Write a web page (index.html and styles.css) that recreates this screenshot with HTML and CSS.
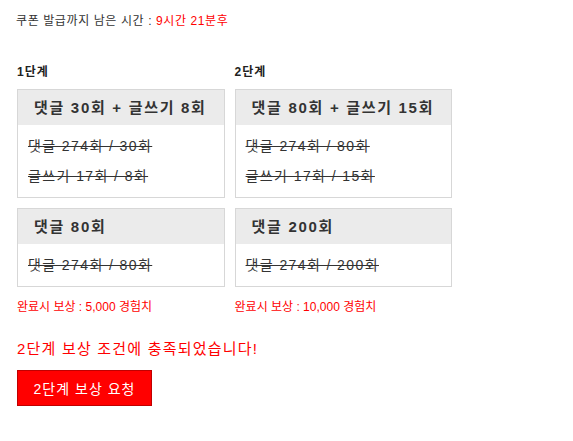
FILE: index.html
```html
<!DOCTYPE html>
<html lang="ko">
<head>
<meta charset="utf-8">
<link rel="stylesheet" href="styles.css">
</head>
<body>
<div class="page">
  <p class="timer">쿠폰 발급까지 남은 시간 : <span class="red">9시간 21분후</span></p>
  <div class="stages">
    <div class="stage">
      <h3 class="stage-title">1단계</h3>
      <div class="box">
        <div class="box-head">댓글 30회 + 글쓰기 8회</div>
        <div class="box-body">
          <p class="done">댓글 274회 / 30회</p>
          <p class="done">글쓰기 17회 / 8회</p>
        </div>
      </div>
      <div class="box">
        <div class="box-head">댓글 80회</div>
        <div class="box-body">
          <p class="done">댓글 274회 / 80회</p>
        </div>
      </div>
      <p class="reward">완료시 보상 : 5,000 경험치</p>
    </div>
    <div class="stage">
      <h3 class="stage-title">2단계</h3>
      <div class="box">
        <div class="box-head">댓글 80회 + 글쓰기 15회</div>
        <div class="box-body">
          <p class="done">댓글 274회 / 80회</p>
          <p class="done">글쓰기 17회 / 15회</p>
        </div>
      </div>
      <div class="box">
        <div class="box-head">댓글 200회</div>
        <div class="box-body">
          <p class="done">댓글 274회 / 200회</p>
        </div>
      </div>
      <p class="reward">완료시 보상 : 10,000 경험치</p>
    </div>
  </div>
  <p class="notice">2단계 보상 조건에 충족되었습니다!</p>
  <button class="claim">2단계 보상 요청</button>
</div>
</body>
</html>
```
FILE: styles.css
```css
* { box-sizing: border-box; }
body {
  margin: 0;
  background: #fff;
  color: #333;
  font-family: "Liberation Sans", "Noto Sans CJK KR", sans-serif;
}
.page {
  padding: 13px 16px 13px 17px;
}
.timer {
  margin: 0 0 0 -1px;
  font-size: 12px;
  line-height: 16px;
  letter-spacing: 0.6px;
  color: #333;
}
.red { color: #f00; }
.stages {
  display: flex;
  align-items: flex-start;
  gap: 10px;
  margin-top: 35px;
}
.stage {
  display: flex;
  flex-direction: column;
  gap: 10px;
}
.stage-title {
  margin: 0 0 -1px;
  font-size: 12px;
  line-height: 16px;
  letter-spacing: 1px;
  font-weight: bold;
  color: #222;
}
.box {
  border: 1px solid #d7d7d7;
  background: #fff;
}
.box-head {
  background: #ebebeb;
  height: 35px;
  padding: 0 17px 0 16px;
  font-size: 15px;
  font-weight: bold;
  line-height: 35px;
  letter-spacing: 1.7px;
  color: #333;
  white-space: nowrap;
}
.box-body {
  padding: 6px 10px 6px;
}
.done {
  margin: 0;
  font-size: 14px;
  line-height: 30px;
  letter-spacing: 1.4px;
  text-decoration: line-through;
  color: #333;
  white-space: nowrap;
}
.reward {
  margin: 2px 0 0;
  font-size: 12px;
  line-height: 16px;
  color: #f00;
  white-space: nowrap;
}
.notice {
  margin: 25px 0 0;
  font-size: 15px;
  line-height: 18px;
  letter-spacing: 1.2px;
  color: #f00;
}
.claim {
  margin-top: 12px;
  width: 135px;
  height: 36px;
  background: #f00;
  border: 1px solid #c00000;
  color: #fff;
  font-family: inherit;
  font-size: 14px;
  letter-spacing: 1px;
  padding: 0;
}
```
